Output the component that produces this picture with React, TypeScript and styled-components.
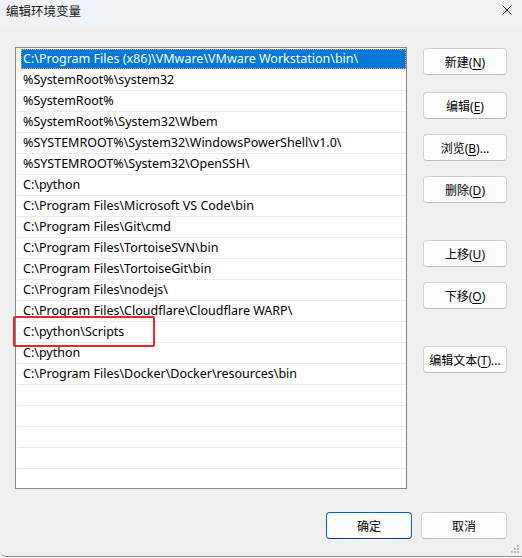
import * as React from "react";
import styled, { createGlobalStyle } from "styled-components";

const paths: string[] = [
  "C:\\Program Files (x86)\\VMware\\VMware Workstation\\bin\\",
  "%SystemRoot%\\system32",
  "%SystemRoot%",
  "%SystemRoot%\\System32\\Wbem",
  "%SYSTEMROOT%\\System32\\WindowsPowerShell\\v1.0\\",
  "%SYSTEMROOT%\\System32\\OpenSSH\\",
  "C:\\python",
  "C:\\Program Files\\Microsoft VS Code\\bin",
  "C:\\Program Files\\Git\\cmd",
  "C:\\Program Files\\TortoiseSVN\\bin",
  "C:\\Program Files\\TortoiseGit\\bin",
  "C:\\Program Files\\nodejs\\",
  "C:\\Program Files\\Cloudflare\\Cloudflare WARP\\",
  "C:\\python\\Scripts",
  "C:\\python",
  "C:\\Program Files\\Docker\\Docker\\resources\\bin",
  "",
  "",
  "",
  "",
  "",
];

// label text, mnemonic letter, trailing text, extra top margin
const sideButtons: [string, string, string, number][] = [
  ["新建(", "N", ")", 1],
  ["编辑(", "E", ")", 17],
  ["浏览(", "B", ")...", 15],
  ["删除(", "D", ")", 15],
  ["上移(", "U", ")", 37],
  ["下移(", "O", ")", 15],
  ["编辑文本(", "T", ")...", 37],
];

const GlobalStyle = createGlobalStyle`
  html, body {
    margin: 0;
    padding: 0;
    background: #ffffff;
  }
  body {
    font-family: "Noto Sans", "Noto Sans CJK SC", sans-serif;
    font-size: 12px;
    color: #000;
  }
`;

export default function App() {
  return (
    <>
      <GlobalStyle />
      <Window>
        <TitleBar>
          <Title>编辑环境变量</Title>
          <CloseButton>
            <svg width="10" height="10" viewBox="0 0 10 10">
              <path d="M0.5 0.5 L9.5 9.5 M9.5 0.5 L0.5 9.5" stroke="#1c1c1c" strokeWidth="1" fill="none" />
            </svg>
          </CloseButton>
        </TitleBar>
        <Content>
          <ListWrap>
            <List>
              {paths.map((p, i) => (
                <Row key={i}>
                  <RowInner $selected={i === 0}>{p}</RowInner>
                </Row>
              ))}
            </List>
            <Highlight />
          </ListWrap>
          <SideColumn>
            {sideButtons.map(([pre, key, post, mt]) => (
              <SideButton key={key} $mt={mt}>
                {pre}
                <u>{key}</u>
                {post}
              </SideButton>
            ))}
          </SideColumn>
        </Content>
        <Footer>
          <DialogButton $primary>确定</DialogButton>
          <DialogButton>取消</DialogButton>
        </Footer>
        <Grip width="9" height="9" viewBox="0 0 9 9">
          <rect x="6" y="0" width="2" height="2" fill="#b8b8b8" />
          <rect x="3" y="3" width="2" height="2" fill="#b8b8b8" />
          <rect x="6" y="3" width="2" height="2" fill="#b8b8b8" />
          <rect x="0" y="6" width="2" height="2" fill="#b8b8b8" />
          <rect x="3" y="6" width="2" height="2" fill="#b8b8b8" />
          <rect x="6" y="6" width="2" height="2" fill="#b8b8b8" />
        </Grip>
      </Window>
    </>
  );
}

const Window = styled.div`
  position: relative;
  box-sizing: border-box;
  width: 522px;
  height: 557px;
  display: flex;
  flex-direction: column;
  background: #f0f0f0;
  border-bottom: 1px solid #8c8c8c;
  border-bottom-left-radius: 6px;
  overflow: hidden;
`;

const TitleBar = styled.div`
  height: 26px;
  flex: none;
  display: flex;
  align-items: center;
  justify-content: space-between;
  padding: 0 10px 0 6px;
  background: #eef3f8;
`;

const Title = styled.span`
  font-size: 12.5px;
  color: #1a1a1a;
  margin-top: -5px;
`;

const CloseButton = styled.span`
  display: flex;
  margin-top: -6px;
`;

const Content = styled.div`
  display: grid;
  grid-template-columns: 392px 84px;
  column-gap: 16px;
  padding: 21px 15px 0 15px;
`;

const ListWrap = styled.div`
  position: relative;
`;

const List = styled.div`
  box-sizing: border-box;
  height: 442px;
  border: 1px solid #828790;
  background: #ffffff;
  padding: 1px 0 0 1px;
  overflow: hidden;
`;

const Row = styled.div`
  height: 20px;
  border-bottom: 1px solid #ebebeb;
  display: flex;
`;

const RowInner = styled.div<{ $selected?: boolean }>`
  flex: 1;
  margin-left: 4px;
  padding-left: 2px;
  font-size: 12.5px;
  line-height: 20px;
  white-space: nowrap;
  background: ${(p) => (p.$selected ? "#0078d7" : "transparent")};
  color: ${(p) => (p.$selected ? "#ffffff" : "#000000")};
  outline: ${(p) => (p.$selected ? "1px dotted #f2a33a" : "none")};
  outline-offset: -1px;
`;

const Highlight = styled.div`
  position: absolute;
  left: -2px;
  top: 269px;
  width: 142px;
  height: 31px;
  box-sizing: border-box;
  border: 2px solid #e8262b;
  border-radius: 2px;
  pointer-events: none;
`;

const SideColumn = styled.div`
  display: flex;
  flex-direction: column;
`;

const ButtonBase = styled.button`
  box-sizing: border-box;
  height: 27px;
  padding: 0;
  font-family: "Noto Sans", "Noto Sans CJK SC", sans-serif;
  font-size: 12px;
  color: #000;
  background: #fdfdfd;
  border: 1px solid #d0d0d0;
  border-bottom-color: #bcbcbc;
  border-radius: 4px;

  u {
    text-underline-offset: 2px;
  }
`;

const SideButton = styled(ButtonBase)<{ $mt: number }>`
  width: 84px;
  margin-top: ${(p) => p.$mt}px;
`;

const Footer = styled.div`
  display: flex;
  justify-content: flex-end;
  gap: 9px;
  margin-top: 23px;
  padding: 0 15px;
`;

const DialogButton = styled(ButtonBase)<{ $primary?: boolean }>`
  width: 86px;
  border-color: ${(p) => (p.$primary ? "#0067c0" : "#d0d0d0")};
  border-bottom-color: ${(p) => (p.$primary ? "#003e92" : "#bcbcbc")};
`;

const Grip = styled.svg`
  position: absolute;
  right: 2px;
  bottom: 2px;
`;
